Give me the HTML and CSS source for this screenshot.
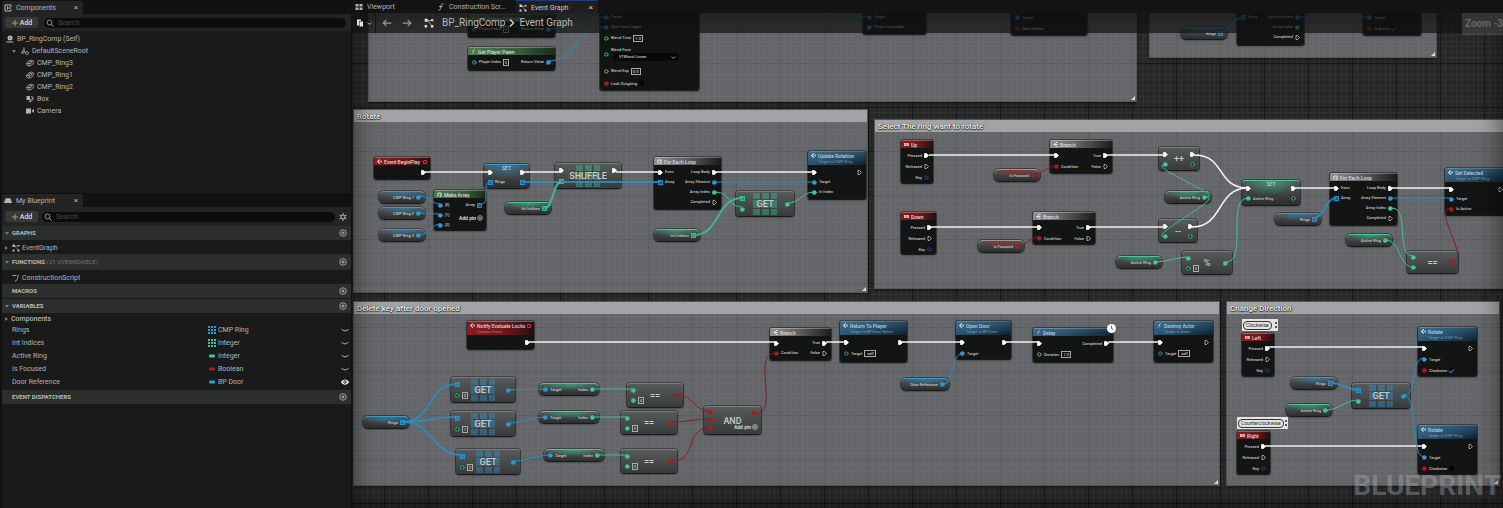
FILE: index.html
```
<!DOCTYPE html>
<html lang="en">

<head>
  <meta charset="utf-8">
  <title>BP_RingComp - Event Graph</title>
  <link rel="stylesheet" href="styles.css">
</head>

<body>
  <svg width="0" height="0" class="defs">
    <symbol id="i-plus" viewBox="0 0 16 16"><path d="M8 2v12M2 8h12" stroke="#8fae4a" stroke-width="2" /></symbol>
    <symbol id="i-search" viewBox="0 0 16 16"><circle cx="7" cy="7" r="5" fill="none" stroke="currentColor" stroke-width="1.6" /><path d="M11 11l4 4" stroke="currentColor" stroke-width="2" /></symbol>
    <symbol id="i-add" viewBox="0 0 16 16"><circle cx="8" cy="8" r="6.5" fill="none" stroke="currentColor" stroke-width="1.6" /><path d="M8 4.500v7M4.500 8h7" stroke="currentColor" stroke-width="1.800" /></symbol>
    <symbol id="i-gear" viewBox="0 0 16 16"><circle cx="8" cy="8" r="4" fill="none" stroke="currentColor" stroke-width="2" /><path d="M8 0v4M8 12v4M1 4l3.500 2M11.500 10l3.500 2M1 12l3.500-2M11.500 6L15 4" stroke="currentColor" stroke-width="2" /></symbol>
    <symbol id="i-ring" viewBox="0 0 16 16"><path d="M5 4l6-2 4 2-1 6-6 4-6-1-1-4zM5 9l3-4 4 0-2 4zM1 9l4 0 3 5" fill="none" stroke="currentColor" stroke-width="1.500" /></symbol>
    <symbol id="i-graph" viewBox="0 0 16 16"><path d="M1 1h5v5H1zM1 11h4v4H1zM11 2h4v3h-4zM11 11h4v4h-4z" fill="currentColor" /><path d="M6 4l6 8M6 4h5" stroke="currentColor" /></symbol>
    <symbol id="i-func" viewBox="0 0 16 16"><path d="M13 2c-3-1-4 0-5 4l-1 5c-1 3-2 4-4 3M4 7h7" fill="none" stroke="currentColor" stroke-width="1.800" /></symbol>
    <symbol id="i-construct" viewBox="0 0 16 16"><path d="M1 3h8M14 2c-3 1-2 4-3 7s-2 5-5 5" fill="none" stroke="currentColor" stroke-width="1.800" /></symbol>
    <symbol id="i-actor" viewBox="0 0 16 16"><circle cx="8" cy="6" r="5" fill="currentColor" /><path d="M1 14h14" stroke="currentColor" stroke-width="2" /><path d="M6 4l3 3" stroke="#1a1a1a" /></symbol>
    <symbol id="i-scene" viewBox="0 0 16 16"><path d="M6 1v9M6 5L1 12M6 8l4 4M1 12h6" fill="none" stroke="currentColor" stroke-width="1.800" /><circle cx="12" cy="12" r="3" fill="none" stroke="currentColor" stroke-width="1.500" /></symbol>
    <symbol id="i-box" viewBox="0 0 16 16"><path d="M1 2h7v8H1z" fill="currentColor" /><path d="M10 3l4 1v5l-5 5-4-2M9 13V9l5-2" fill="none" stroke="currentColor" stroke-width="1.600" /></symbol>
    <symbol id="i-camera" viewBox="0 0 16 16"><path d="M0 3h10v10H0zM11 8l5-4v8z" fill="currentColor" /></symbol>
    <symbol id="i-comps" viewBox="0 0 16 16"><path d="M14 2H2v12h12v-3M14 2v4M14 8H7M7 5v6" fill="none" stroke="currentColor" stroke-width="2" /></symbol>
    <symbol id="i-book" viewBox="0 0 16 16"><path d="M3 3l5-1 5 1 3 9H0z" fill="currentColor" /></symbol>
    <symbol id="i-view" viewBox="0 0 16 16"><path d="M1 2h6v5H1zM9 2h6v5H9zM1 9h6v5H1zM9 9h6v5H9z" fill="currentColor" /></symbol>
    <symbol id="i-find" viewBox="0 0 16 16"><path d="M2 1h8v3H6v9H2zM7 5h7v10H7z" fill="currentColor" /></symbol>
    <symbol id="i-left" viewBox="0 0 16 16"><path d="M15 8H2M7 3L2 8l5 5" fill="none" stroke="currentColor" stroke-width="2" /></symbol>
    <symbol id="i-right" viewBox="0 0 16 16"><path d="M1 8h13M9 3l5 5-5 5" fill="none" stroke="currentColor" stroke-width="2" /></symbol>
    <symbol id="i-down" viewBox="0 0 16 16"><path d="M2 5l6 6 6-6" fill="none" stroke="currentColor" stroke-width="2.500" /></symbol>
    <symbol id="i-crumb" viewBox="0 0 16 16"><path d="M4 1l7 7-7 7" fill="none" stroke="currentColor" stroke-width="2.500" /></symbol>
    <symbol id="i-grid" viewBox="0 0 16 16"><path d="M0 0h4v4H0zM6 0h4v4H6zM12 0h4v4h-4zM0 6h4v4H0zM6 6h4v4H6zM12 6h4v4h-4zM0 12h4v4H0zM6 12h4v4H6zM12 12h4v4h-4z" fill="currentColor" /></symbol>
    <symbol id="i-pill" viewBox="0 0 16 16"><rect x="2" y="5" width="12" height="6" rx="2" fill="currentColor" /></symbol>
    <symbol id="i-closed" viewBox="0 0 16 16"><path d="M1 6c4 5 10 5 14 0" fill="none" stroke="currentColor" stroke-width="2" /></symbol>
    <symbol id="i-open" viewBox="0 0 16 16"><path d="M0 8c4-7 12-7 16 0-4 7-12 7-16 0z" fill="currentColor" /><circle cx="8" cy="8" r="3.500" fill="#1a1a1a" /><circle cx="8" cy="8" r="1.500" fill="currentColor" /></symbol>
    <symbol id="p-exec" viewBox="0 0 10 10"><path d="M1 1h4l4 4-4 4H1z" fill="#fff" stroke="#fff" stroke-width="1.500" stroke-linejoin="round" /></symbol>
    <symbol id="p-execo" viewBox="0 0 10 10"><path d="M2 1h3l4 4-4 4H2z" fill="none" stroke="#ddd" stroke-width="1.400" stroke-linejoin="round" /></symbol>
    <symbol id="p-dot" viewBox="0 0 10 10"><circle cx="4.500" cy="5" r="4.500" fill="currentColor" /><path d="M8 3l2 2-2 2z" fill="currentColor" /></symbol>
    <symbol id="p-ring" viewBox="0 0 10 10"><circle cx="4.500" cy="5" r="3.300" fill="#0d1512" stroke="currentColor" stroke-width="1.800" /><path d="M8.500 3l1.500 2-1.500 2z" fill="currentColor" /></symbol>
    <symbol id="p-arr" viewBox="0 0 10 10"><path d="M0 0h10v10H0z" fill="currentColor" opacity=".45" /><path d="M0 0h3v3H0zM4 0h3v3H4zM8 0h2v3H8zM0 4h3v3H0zM8 4h2v3H8zM0 8h3v2H0zM4 8h3v2H4zM8 8h2v2H8z" fill="currentColor" /></symbol>
    <symbol id="h-event" viewBox="0 0 10 10"><path d="M5 0L0 5l5 5 1-2-3-3 3-3zM6 5l3-3v6z" fill="#eee" /></symbol>
    <symbol id="h-key" viewBox="0 0 10 10"><path d="M0 2h10v6H0z" fill="#e8b8b8" /><path d="M2 4h1M5 4h1M8 4h1M3 6h4" stroke="#7a1a1a" /></symbol>
    <symbol id="h-branch" viewBox="0 0 10 10"><path d="M9 1H6L2 5l4 4h3M2 5h7" fill="none" stroke="#fff" stroke-width="1.600" /></symbol>
    <symbol id="h-loop" viewBox="0 0 10 10"><path d="M2 7V2h6v5M5 8l3 1 1-3M1 6l2 3" fill="none" stroke="#fff" stroke-width="1.600" /></symbol>
  </svg>

  <div class="app">
    <aside class="sidebar">
      <section class="panel components">
        <div class="panel-tabs">
          <div class="panel-tab"><svg class="icon"><use href="#i-comps" /></svg>Components<button class="close" aria-label="Close Components">×</button></div>
        </div>
        <div class="panel-tools">
          <button class="add-btn"><svg class="icon"><use href="#i-plus" /></svg>Add</button>
          <label class="search"><svg class="icon"><use href="#i-search" /></svg><input type="text" placeholder="Search" aria-label="Search components"></label>
        </div>
        <ul class="tree">
          <li class="level-0"><svg class="icon"><use href="#i-actor" /></svg>BP_RingComp (Self)</li>
          <li class="level-1"><span class="arrow open"></span><svg class="icon"><use href="#i-scene" /></svg>DefaultSceneRoot</li>
          <li class="level-2"><svg class="icon"><use href="#i-ring" /></svg>CMP_Ring3</li>
          <li class="level-2"><svg class="icon"><use href="#i-ring" /></svg>CMP_Ring1</li>
          <li class="level-2"><svg class="icon"><use href="#i-ring" /></svg>CMP_Ring2</li>
          <li class="level-2"><svg class="icon"><use href="#i-box" /></svg>Box</li>
          <li class="level-2"><svg class="icon"><use href="#i-camera" /></svg>Camera</li>
        </ul>
      </section>

      <section class="panel blueprint">
        <div class="panel-tabs">
          <div class="panel-tab"><svg class="icon"><use href="#i-book" /></svg>My Blueprint<button class="close" aria-label="Close My Blueprint">×</button></div>
        </div>
        <div class="panel-tools">
          <button class="add-btn"><svg class="icon"><use href="#i-plus" /></svg>Add</button>
          <label class="search"><svg class="icon"><use href="#i-search" /></svg><input type="text" placeholder="Search" aria-label="Search blueprint"></label>
          <button class="icon-btn" aria-label="Settings"><svg class="icon"><use href="#i-gear" /></svg></button>
        </div>

        <div class="section-head"><span class="arrow open"></span><b>GRAPHS</b><button class="icon-btn" aria-label="Add graph"><svg class="icon"><use href="#i-add" /></svg></button></div>
        <div class="entry"><span class="arrow"></span><svg class="icon"><use href="#i-graph" /></svg>EventGraph</div>
        <div class="section-head tall"><span class="arrow open"></span><b>FUNCTIONS</b><span class="hint">(21 OVERRIDABLE)</span><button class="icon-btn" aria-label="Add function"><svg class="icon"><use href="#i-add" /></svg></button></div>
        <div class="entry"><span class="arrow none"></span><svg class="icon"><use href="#i-construct" /></svg>ConstructionScript</div>
        <div class="section-head"><span class="arrow none"></span><b>MACROS</b><button class="icon-btn" aria-label="Add macro"><svg class="icon"><use href="#i-add" /></svg></button></div>
        <div class="section-head"><span class="arrow open"></span><b>VARIABLES</b><button class="icon-btn" aria-label="Add variable"><svg class="icon"><use href="#i-add" /></svg></button></div>
        <div class="category"><span class="arrow"></span>Components</div>
        <table class="variables">
          <tr><td>Rings</td><td><svg class="icon c-obj"><use href="#i-grid" /></svg>CMP Ring</td><td><svg class="icon"><use href="#i-closed" /></svg></td></tr>
          <tr><td>Int Indices</td><td><svg class="icon c-int"><use href="#i-grid" /></svg>Integer</td><td><svg class="icon"><use href="#i-closed" /></svg></td></tr>
          <tr><td>Active Ring</td><td><svg class="icon c-int"><use href="#i-pill" /></svg>Integer</td><td><svg class="icon"><use href="#i-closed" /></svg></td></tr>
          <tr><td>Is Focused</td><td><svg class="icon c-bool"><use href="#i-pill" /></svg>Boolean</td><td><svg class="icon"><use href="#i-closed" /></svg></td></tr>
          <tr><td>Door Reference</td><td><svg class="icon c-obj"><use href="#i-pill" /></svg>BP Door</td><td><svg class="icon bright"><use href="#i-open" /></svg></td></tr>
        </table>
        <div class="section-head"><span class="arrow none"></span><b>EVENT DISPATCHERS</b><button class="icon-btn" aria-label="Add dispatcher"><svg class="icon"><use href="#i-add" /></svg></button></div>
      </section>
    </aside>

    <main class="editor">
      <nav class="tabs">
        <a class="tab" href="#viewport"><svg class="icon"><use href="#i-view" /></svg>Viewport</a>
        <a class="tab" href="#construction"><svg class="icon"><use href="#i-func" /></svg>Construction Scr...</a>
        <a class="tab active" href="#graph"><svg class="icon"><use href="#i-graph" /></svg>Event Graph<span class="close">×</span></a>
      </nav>
      <div class="canvas">
        <div class="world" id="world"></div>
        <div class="vignette"></div>
        <div class="toolbar">
          <button class="find" aria-label="Bookmarks"><svg class="icon"><use href="#i-find" /></svg><svg class="icon small"><use href="#i-down" /></svg></button>
          <button aria-label="Back"><svg class="icon wide"><use href="#i-left" /></svg></button>
          <button aria-label="Forward"><svg class="icon wide"><use href="#i-right" /></svg></button>
          <div class="crumbs">
            <svg class="icon wide"><use href="#i-graph" /></svg>
            <a href="#bp">BP_RingComp</a>
            <svg class="icon"><use href="#i-crumb" /></svg>
            <a href="#graph">Event Graph</a>
          </div>
          <div class="zoom">Zoom -3</div>
        </div>
        <div class="watermark">BLUEPRINT</div>
      </div>
    </main>
  </div>

  <script src="graph.js"></script>
</body>

</html>
```
FILE: styles.css
```
* {
  box-sizing: border-box;
}

body {
  margin: 0;
  background: #111;
  color: #b4b4b4;
  font-family: Roboto, "Liberation Sans", sans-serif;
  font-size: 7px;
  line-height: 10px;
}

button,
input,
select {
  margin: 0;
  padding: 0;
  border: 0;
  background: none;
  color: inherit;
  font: inherit;
}

a {
  color: inherit;
  text-decoration: none;
}

.defs {
  position: absolute;
}

.icon {
  width: 8px;
  height: 8px;
  flex: none;
}

.icon.small {
  width: 5px;
  height: 5px;
}

.icon.wide {
  width: 10px;
  height: 10px;
}

.icon.bright {
  color: #fff;
}

.c-obj { color: #2b9ad6; }
.c-int { color: #3cc79a; }
.c-bool { color: #a81c1c; }
.c-float { color: #6bd63a; }
.c-key { color: #27489c; }
.c-exec { color: #fff; }

.app {
  display: flex;
  height: 100vh;
}

/* left side */

.sidebar {
  width: 352px;
  flex: none;
  display: flex;
  flex-direction: column;
  padding: 0 1px 0 2px;
}

.panel {
  background: #1a1a1a;
}

.components {
  height: 193px;
}

.blueprint {
  flex: 1;
}

.panel-tabs {
  height: 14px;
  padding-top: 1px;
  background: #111;
}

.panel-tab {
  display: flex;
  align-items: center;
  gap: 4px;
  width: 81px;
  height: 13px;
  padding: 0 5px 0 2px;
  border-radius: 2px 2px 0 0;
  background: #242424;
}

.close {
  margin-left: auto;
  font-size: 8px;
  line-height: 8px;
}

.panel-tools {
  display: flex;
  align-items: center;
  gap: 6px;
  height: 17px;
  padding: 0 5px 0 3px;
  background: #242424;
}

.blueprint .panel-tools {
  height: 19px;
  gap: 4px;
  padding-right: 4px;
}

.add-btn {
  display: flex;
  align-items: center;
  justify-content: center;
  gap: 1px;
  width: 33px;
  height: 11px;
  border-radius: 2px;
  background: #383838;
  color: #ddd;
  font-weight: 500;
}

.search {
  display: flex;
  align-items: center;
  gap: 4px;
  flex: 1;
  height: 10px;
  padding: 0 2px;
  border-radius: 5px;
  background: #0c0c0c;
}

.search input {
  flex: 1;
  outline: none;
}

.search input::placeholder {
  color: #4a4a4a;
}

.icon-btn {
  display: flex;
}

.tree {
  margin: 0;
  padding: 2px 0 0;
  list-style: none;
}

.tree li {
  display: flex;
  align-items: center;
  gap: 3px;
  height: 12px;
}

.level-0 { padding-left: 4px; }
.level-1 { padding-left: 10px; }
.level-2 { padding-left: 24px; }

.arrow {
  width: 5px;
  flex: none;
  margin-right: 1px;
}

.arrow::before {
  content: "";
  display: block;
  width: 0;
  height: 0;
  border: 2px solid transparent;
  border-left: 3px solid #777;
  border-right: 0;
}

.arrow.open::before {
  border: 2px solid transparent;
  border-top: 3px solid #777;
  border-bottom: 0;
}

.arrow.none::before {
  border-color: transparent;
}

.section-head {
  display: flex;
  align-items: center;
  gap: 1px;
  height: 15px;
  padding: 0 4px 0 3px;
  border-bottom: 1px solid #1a1a1a;
  background: #2d2f2f;
  color: #bbb;
  font-size: 6px;
}

.section-head.tall {
  height: 17px;
}

.section-head .icon-btn {
  margin-left: auto;
}

.hint {
  margin-left: 1px;
  color: #757575;
}

.entry {
  display: flex;
  align-items: center;
  gap: 1px;
  height: 13px;
  padding-left: 3px;
}

.entry .icon {
  margin-right: 1px;
}

.category {
  display: flex;
  align-items: center;
  height: 9px;
  padding-left: 3px;
  font-weight: 500;
}

.variables {
  width: 100%;
  margin-bottom: 2px;
  border-collapse: collapse;
}

.variables tr {
  height: 13px;
}

.variables td {
  padding: 0;
}

.variables td:first-child {
  width: 206px;
  padding-left: 10px;
}

.variables td:last-child {
  text-align: right;
}

.variables .icon {
  margin-right: 2px;
  vertical-align: middle;
}

/* graph */

.editor {
  flex: 1;
  min-width: 0;
  display: flex;
  flex-direction: column;
}

.tabs {
  display: flex;
  height: 13px;
  background: #131313;
}

.tab {
  display: flex;
  align-items: center;
  gap: 4px;
  width: 82px;
  padding: 1px 5px 0 3px;
}

.tab.active {
  border-top: 1px solid #1d3a78;
  background: #1f1f1f;
  color: #ccc;
}

.canvas {
  position: relative;
  flex: 1;
  overflow: hidden;
  background-color: #262727;
  background-image:
    linear-gradient(90deg, #171818 1px, transparent 1px),
    linear-gradient(#171818 1px, transparent 1px),
    linear-gradient(90deg, #313232 1px, transparent 1px 5px, #313232 5px 6px, transparent 6px),
    linear-gradient(#313232 1px, transparent 1px 5px, #313232 5px 6px, transparent 6px);
  background-size: 44px 44px, 44px 44px, 11px 11px, 11px 11px;
  background-position: 32px 6px;
}

/* world units are window pixels, panned under the tabs and sidebar */
.world {
  position: absolute;
  left: -352px;
  top: -13px;
}

.wires {
  position: absolute;
  left: 0;
  top: 0;
  width: 1503px;
  height: 508px;
  overflow: visible;
  fill: none;
}

.wire-exec { stroke: #f2f2f2; stroke-width: 1.5px; }
.wire-obj { stroke: #2a8fc4; }
.wire-int { stroke: #3fc096; }
.wire-bool { stroke: #8a1d22; }
.thick { stroke-width: 2px; opacity: 0.85; }

.vignette {
  position: absolute;
  inset: 0;
  pointer-events: none;
  box-shadow: inset 0 0 26px rgba(0, 0, 0, 0.6);
}

.toolbar {
  position: absolute;
  inset: 0 0 auto;
  display: flex;
  align-items: center;
  height: 20px;
  background: rgba(18, 18, 18, 0.68);
}

.toolbar button {
  display: flex;
  align-items: center;
  justify-content: center;
  width: 20px;
  height: 20px;
  color: #999;
}

.toolbar .find {
  gap: 3px;
  width: 24px;
  margin-right: 1px;
  border-right: 1px solid #161616;
  color: #ddd;
}

.crumbs {
  display: flex;
  align-items: center;
  gap: 3px;
  height: 20px;
  padding-left: 7px;
  color: #b8b8b8;
  font-size: 10px;
}

.crumbs .icon {
  color: #ddd;
}

.crumbs .icon.wide {
  margin-right: 5px;
}

.zoom {
  align-self: flex-start;
  flex: none;
  margin-left: auto;
  width: 41px;
  padding-left: 3px;
  background: rgba(130, 130, 130, 0.3);
  color: #666;
  font-size: 10px;
  font-weight: bold;
  line-height: 22px;
  white-space: nowrap;
}

.watermark {
  position: absolute;
  right: 2px;
  bottom: 6px;
  color: rgba(170, 175, 180, 0.4);
  font-size: 28px;
  font-weight: bold;
  line-height: 32px;
}

.comment {
  position: absolute;
  border: 1px solid rgba(70, 70, 70, 0.5);
  background: rgba(172, 174, 180, 0.46);
  box-shadow: 0 1px 2px rgba(0, 0, 0, 0.6);
}

.comment::after {
  content: "";
  position: absolute;
  right: 1px;
  bottom: 1px;
  border-left: 4px solid transparent;
  border-bottom: 4px solid #ddd;
}

.comment h2 {
  margin: 0;
  height: 12px;
  padding-left: 3px;
  background: #a2a3a5;
  color: #f0f0f0;
  font-size: 8px;
  font-weight: 500;
  line-height: 13px;
  text-shadow: 0 1px 1px #222, 1px 0 1px #333;
}

.node {
  position: absolute;
  overflow: hidden;
  border-radius: 2px;
  background: rgba(14, 17, 15, 0.95);
  box-shadow: 0 1px 2px rgba(0, 0, 0, 0.8), 0 0 0 1px rgba(10, 10, 10, 0.4);
  color: #c4c4c4;
  font-size: 4px;
  font-weight: 500;
  line-height: 6px;
  white-space: nowrap;
}

.node header {
  display: flex;
  gap: 2px;
  height: 8px;
  padding: 1px 3px;
  border-top: 1px solid rgba(255, 255, 255, 0.3);
  color: #dcdcdc;
  font-size: 5px;
}

.node header small {
  display: block;
  color: rgba(255, 255, 255, 0.35);
  font-size: 4px;
  line-height: 6px;
}

.node header .icon {
  width: 5px;
  height: 5px;
}

.node .delegate {
  width: 4px;
  height: 4px;
  margin: 1px 0 0 auto;
  border: 1px solid #d33;
  border-radius: 1px;
}

.node.sub header { height: 14px; }
.node.red header { background: linear-gradient(90deg, #8c1b1e, #6d1518 60%, #251010); }
.node.blue header { background: linear-gradient(165deg, #3c6f92, #28506c 50%, #10202a); }
.node.blue header { color: #b9d2e2; }
.node.green header { background: linear-gradient(90deg, #4d7b4e, #385c39 60%, #1b2b1b); }
.node.gray header { background: linear-gradient(90deg, #909090, #5c5c5c 50%, #1c1c1c); }

.rows {
  display: flex;
  justify-content: space-between;
  padding: 2px 4px 0;
}

.rows > div,
.compact > div {
  display: flex;
  flex-direction: column;
}

.pin {
  display: flex;
  align-items: center;
  gap: 2px;
}

.out .pin {
  justify-content: flex-end;
}

.pin svg {
  width: 5px;
  height: 5px;
  flex: none;
}

.pin input[type="text"] {
  height: 7px;
  border: 1px solid #aaa;
  text-align: center;
}

.pin input[type="checkbox"] {
  appearance: none;
  width: 5px;
  height: 5px;
  border-radius: 1px;
  background: #050505;
}

.pin input[type="checkbox"]:checked::after {
  content: "";
  display: block;
  width: 4px;
  height: 2px;
  margin: 1px 0 0;
  border-left: 1px solid #2f7fe0;
  border-bottom: 1px solid #2f7fe0;
  transform: rotate(-45deg);
}

.pin .stack {
  position: relative;
  display: flex;
  flex-direction: column;
  align-items: flex-start;
}

.pin select {
  appearance: none;
  width: 66px;
  height: 8px;
  margin-left: 2px;
  padding: 0 6px;
  border-radius: 2px;
  background: #070808;
}

.stack svg {
  position: absolute;
  right: 3px;
  bottom: 1px;
}

.compact {
  display: flex;
  justify-content: space-between;
  padding: 1px 4px;
  border-top: 1px solid rgba(170, 170, 170, 0.6);
  border-radius: 3px;
  background: linear-gradient(rgba(84, 88, 88, 0.85), rgba(52, 54, 54, 0.9));
}

.compact > div {
  position: relative;
  justify-content: space-around;
}

.compact strong {
  position: absolute;
  inset: 0;
  display: flex;
  align-items: center;
  justify-content: center;
  color: #c8cccc;
  font-size: 9px;
  font-weight: 500;
}

.compact.set strong {
  inset: 0 0 auto;
  font-size: 5px;
}

.compact.set {
  padding-top: 2px;
}

.compact.glow-int,
.var.glow-int {
  border-top-color: #4fc59d;
  background: radial-gradient(ellipse 50% 60% at 50% 0, rgba(50, 180, 130, 0.7), transparent), linear-gradient(#525757, #2c2e2e);
}

.compact.glow-obj,
.var.glow-obj {
  border-top-color: #3c9cc9;
  background: radial-gradient(ellipse 50% 60% at 50% 0, rgba(40, 130, 190, 0.7), transparent), linear-gradient(#525757, #2c2e2e);
}

.var.glow-bool {
  background: radial-gradient(ellipse 50% 60% at 50% 0, rgba(180, 30, 30, 0.7), transparent), linear-gradient(#525757, #2c2e2e);
}

/* 3x3 tiles behind GET and SHUFFLE */
.tiles {
  position: absolute;
  top: 1px;
  bottom: 1px;
  left: 50%;
  width: 24px;
  margin-left: -12px;
  opacity: 0.38;
  background-image:
    linear-gradient(90deg, transparent 7px, #3c4141 7px),
    linear-gradient(currentColor, currentColor);
  background-size: 9px 100%, 100% 100%;
}

.tiles::after {
  content: "";
  position: absolute;
  inset: 6px 0;
  border: solid #3c4141;
  border-width: 1px 0;
}

.var {
  display: flex;
  align-items: center;
  justify-content: flex-end;
  gap: 2px;
  padding: 0 4px;
  border-top: 1px solid #999;
  border-radius: 5px;
}

.var.both {
  justify-content: space-between;
}

.add-pin {
  position: absolute;
  right: 3px;
  bottom: 4px;
  display: flex;
  align-items: center;
  gap: 1px;
  color: #e8e8e8;
  font-size: 5px;
}

.green .add-pin {
  bottom: 9px;
}

.add-pin svg {
  width: 6px;
  height: 6px;
}

.bubble {
  position: absolute;
  display: flex;
  align-items: center;
  justify-content: space-between;
  padding: 1px;
  background: #e4e4e4;
  color: #222;
  font-size: 5px;
  line-height: 7px;
}

.bubble span {
  padding: 0 2px;
  border: 1px solid #333;
  border-radius: 4px;
}

.bubble i {
  width: 2px;
  height: 6px;
  border: solid #555;
  border-width: 2px 0;
}

.latent {
  position: absolute;
}
```
FILE: graph.js
```
const world = document.getElementById('world');

// [title, x, y, w, h]
const comments = [
  ['', 368, -40, 769, 142],
  ['', 1149, -40, 288, 98],
  ['Rotate', 353, 109, 515, 184],
  ['Select The ring want to rotate', 874, 119, 660, 170],
  ['Delete key after door opened', 353, 301, 867, 185],
  ['Change Direction', 1226, 301, 274, 185],
];

// pins are "shape:type:label", optional fourth part is a value box
const key = ['exec:exec:Pressed', 'execo:exec:Released', 'ring:key:Key'];
const loopIn = ['exec:exec:Exec', 'arr:obj:Array'];
const loopOut = ['exec:exec:Loop Body', 'dot:obj:Array Element', 'dot:int:Array Index', 'execo:exec:Completed'];
const branchIn = ['exec:exec:', 'dot:bool:Condition'];
const branchOut = ['exec:exec:True', 'execo:exec:False'];

const nodes = [
  { c: 'green', x: 468, y: 14, w: 87, h: 23, t: 'Get Player Controller', icon: 'func', i: ['ring:int:Player Index:0'], o: ['dot:obj:Return Value'] },
  { c: 'green', x: 468, y: 47, w: 87, h: 23, t: 'Get Player Pawn', icon: 'func', i: ['ring:int:Player Index:0'], o: ['dot:obj:Return Value'] },
  { c: 'blue', x: 600, y: 2, w: 99, h: 88, t: '', rows: [10, 10, 12, 20, 14, 11], i: ['dot:obj:Target', 'dot:obj:New View Target', 'ring:float:Blend Time:1.0', 'ring:int:Blend Func:select', 'ring:float:Blend Exp:0.0', 'dot:bool:Lock Outgoing:off'], o: [] },
  { c: 'blue', x: 863, y: 2, w: 63, h: 32, t: '', i: ['dot:obj:Target', 'dot:obj:Player Controller'], o: [] },
  { c: 'blue', x: 1011, y: 2, w: 76, h: 33, t: '', row: 11, i: ['dot:obj:Target', 'dot:bool:New Hidden'], o: [] },
  { c: 'gray', x: 1237, y: -8, w: 67, h: 53, t: '', i: ['', 'arr:obj:Array'], o: ['', ...loopOut.slice(1)] },
  { c: 'blue', x: 1363, y: 2, w: 58, h: 33, t: '', row: 11, i: ['dot:obj:Target', 'dot:bool:Is Active:on'], o: [] },

  { c: 'red', x: 374, y: 157, w: 56, h: 22, t: 'Event BeginPlay', icon: 'event', delegate: true, i: [], o: ['exec:exec:'] },
  { c: 'green', x: 434, y: 190, w: 52, h: 40, t: 'Make Array', icon: 'loop', addPin: true, i: ['dot:obj:[0]', 'dot:obj:[1]', 'dot:obj:[2]'], o: ['arr:obj:Array'] },
  { c: 'gray', x: 654, y: 157, w: 67, h: 52, t: 'For Each Loop', icon: 'loop', i: loopIn, o: loopOut },
  { c: 'blue sub', x: 808, y: 151, w: 58, h: 48, t: 'Update Rotation', s: 'Target is CMP Ring', icon: 'event', i: ['exec:exec:', 'dot:obj:Target', 'dot:int:In Index'], o: ['execo:exec:'] },

  { c: 'red', x: 901, y: 140, w: 32, h: 43, t: 'Up', icon: 'key', row: 11, i: [], o: key },
  { c: 'red', x: 901, y: 212, w: 35, h: 42, t: 'Down', icon: 'key', row: 11, i: [], o: key },
  { c: 'gray', x: 1050, y: 140, w: 62, h: 33, t: 'Branch', icon: 'branch', row: 11, i: branchIn, o: branchOut },
  { c: 'gray', x: 1033, y: 212, w: 62, h: 32, t: 'Branch', icon: 'branch', row: 11, i: branchIn, o: branchOut },
  { c: 'gray', x: 1330, y: 173, w: 67, h: 52, t: 'For Each Loop', icon: 'loop', i: loopIn, o: loopOut },
  { c: 'blue sub', x: 1445, y: 168, w: 62, h: 47, t: 'Set Selected', s: 'Target is CMP Ring', icon: 'event', i: ['exec:exec:', 'dot:obj:Target', 'dot:bool:Is Active'], o: ['execo:exec:'] },

  { c: 'red sub', x: 467, y: 321, w: 67, h: 28, t: 'Notify Evaluate Locks', s: 'Custom Event', icon: 'event', delegate: true, i: [], o: ['exec:exec:'] },
  { c: 'gray', x: 770, y: 328, w: 61, h: 32, t: 'Branch', icon: 'branch', i: branchIn, o: branchOut },
  { c: 'blue sub', x: 840, y: 321, w: 67, h: 41, t: 'Return To Player', s: 'Target is BP Door Game', icon: 'event', row: 11, i: ['exec:exec:', 'ring:obj:Target:self'], o: ['exec:exec:'] },
  { c: 'blue sub', x: 956, y: 321, w: 55, h: 38, t: 'Open Door', s: 'Target is BP Door', icon: 'event', row: 11, i: ['exec:exec:', 'dot:obj:Target'], o: ['exec:exec:'] },
  { c: 'blue', x: 1033, y: 328, w: 80, h: 34, t: 'Delay', icon: 'func', row: 11, i: ['exec:exec:', 'ring:float:Duration:1.0'], o: ['exec:exec:Completed'] },
  { c: 'blue sub', x: 1154, y: 321, w: 59, h: 41, t: 'Destroy Actor', s: 'Target is Actor', icon: 'func', row: 11, i: ['exec:exec:', 'ring:obj:Target:self'], o: ['execo:exec:'] },

  { c: 'red', x: 1242, y: 333, w: 32, h: 43, t: 'Left', icon: 'key', row: 11, i: [], o: key },
  { c: 'red', x: 1237, y: 431, w: 33, h: 43, t: 'Right', icon: 'key', row: 11, i: [], o: key },
  { c: 'blue sub', x: 1418, y: 327, w: 59, h: 49, t: 'Rotate', s: 'Target is CMP Ring', icon: 'event', row: 11, i: ['exec:exec:', 'dot:obj:Target', 'dot:bool:Clockwise:on'], o: ['execo:exec:'] },
  { c: 'blue sub', x: 1418, y: 425, w: 59, h: 49, t: 'Rotate', s: 'Target is CMP Ring', icon: 'event', row: 11, i: ['exec:exec:', 'dot:obj:Target', 'dot:bool:Clockwise:off'], o: ['execo:exec:'] },
];

// nodes with a big title in the middle
const compact = [
  { c: 'set glow-obj', x: 484, y: 164, w: 45, h: 24, t: 'SET', i: ['exec:exec:', 'arr:obj:Rings'], o: ['exec:exec:', 'arr:obj:'] },
  { x: 555, y: 163, w: 66, h: 25, t: 'SHUFFLE', tiles: 'int', i: ['exec:exec:', 'arr:int:'], o: ['exec:exec:', ''] },
  { x: 736, y: 191, w: 58, h: 25, t: 'GET', tiles: 'int', i: ['arr:int:', 'dot:int:'], o: ['dot:int:'] },
  { x: 1159, y: 147, w: 40, h: 23, t: '++', i: ['exec:exec:', 'dot:int:'], o: ['exec:exec:', 'ring:int:'] },
  { x: 1159, y: 219, w: 38, h: 23, t: '--', i: ['exec:exec:', 'dot:int:'], o: ['exec:exec:', 'ring:int:'] },
  { x: 1182, y: 251, w: 50, h: 23, t: '%', i: ['dot:int:', 'ring:int::3'], o: ['dot:int:'] },
  { c: 'set glow-int', x: 1242, y: 180, w: 58, h: 25, t: 'SET', i: ['exec:exec:', 'dot:int:Active Ring'], o: ['exec:exec:', 'ring:int:'] },
  { x: 1407, y: 251, w: 51, h: 22, t: '==', i: ['dot:int:', 'dot:int:'], o: ['dot:bool:'] },
  { x: 451, y: 377, w: 64, h: 25, t: 'GET', tiles: 'obj', i: ['arr:obj:', 'ring:int::0'], o: ['dot:obj:'] },
  { x: 451, y: 411, w: 64, h: 25, t: 'GET', tiles: 'obj', i: ['arr:obj:', 'ring:int::1'], o: ['dot:obj:'] },
  { x: 456, y: 449, w: 64, h: 25, t: 'GET', tiles: 'obj', i: ['arr:obj:', 'ring:int::2'], o: ['dot:obj:'] },
  { x: 627, y: 383, w: 56, h: 24, t: '==', i: ['dot:int:', 'dot:int::4'], o: ['dot:bool:'] },
  { x: 621, y: 411, w: 56, h: 23, t: '==', i: ['dot:int:', 'dot:int::5'], o: ['dot:bool:'] },
  { x: 621, y: 449, w: 56, h: 24, t: '==', i: ['dot:int:', 'dot:int::0'], o: ['dot:bool:'] },
  { x: 704, y: 406, w: 57, h: 28, t: 'AND', addPin: true, i: ['dot:bool:', 'dot:bool:', 'dot:bool:'], o: ['dot:bool:', '', ''] },
  { x: 1352, y: 383, w: 58, h: 25, t: 'GET', tiles: 'obj', i: ['arr:obj:', 'dot:int:'], o: ['dot:obj:'] },
];

// [label, type, shape, x, y, w]
const vars = [
  ['Rings', 'obj', 'arr', 1181, 27, 46],
  ['CMP Ring 1', 'obj', 'dot', 379, 191, 46],
  ['CMP Ring 2', 'obj', 'dot', 379, 207, 46],
  ['CMP Ring 3', 'obj', 'dot', 379, 229, 46],
  ['Int Indices', 'int', 'arr', 505, 202, 46],
  ['Int Indices', 'int', 'arr', 654, 229, 46],
  ['Is Focused', 'bool', 'dot', 994, 169, 46],
  ['Is Focused', 'bool', 'dot', 978, 240, 46],
  ['Active Ring', 'int', 'dot', 1165, 191, 46],
  ['Active Ring', 'int', 'dot', 1116, 256, 46],
  ['Rings', 'obj', 'arr', 1275, 213, 46],
  ['Active Ring', 'int', 'dot', 1346, 234, 46],
  ['Rings', 'obj', 'arr', 363, 416, 46],
  ['Door Reference', 'obj', 'dot', 901, 378, 48],
  ['Rings', 'obj', 'arr', 1291, 377, 46],
  ['Active Ring', 'int', 'dot', 1286, 404, 46],
  ['Index', 'int', 'dot', 539, 383, 60, 'Target'],
  ['Index', 'int', 'dot', 539, 411, 60, 'Target'],
  ['Index', 'int', 'dot', 544, 449, 60, 'Target'],
];

// [type, x1, y1, x2, y2, bend], array wires are thick
const wires = [
  ['exec', 425, 172, 490, 172], ['exec', 524, 172, 561, 172], ['exec', 616, 172, 660, 172], ['exec', 716, 172, 814, 172],
  ['obj', 420, 196, 440, 204, 8], ['obj', 420, 213, 440, 214, 8], ['obj', 420, 235, 440, 224, 8], ['obj', 482, 204, 490, 182, 8],
  ['obj thick', 524, 182, 660, 182], ['obj', 716, 182, 814, 182],
  ['int thick', 545, 208, 561, 182, 8], ['int', 716, 192, 742, 207, 14], ['int thick', 694, 235, 742, 198, 26], ['int', 788, 203, 814, 192, 12],
  ['exec', 929, 155, 1056, 155], ['exec', 1107, 155, 1165, 155], ['exec', 931, 227, 1039, 227], ['exec', 1090, 227, 1165, 227],
  ['bool', 1034, 174, 1056, 166, 8], ['bool', 1018, 246, 1039, 237, 8],
  ['exec', 1194, 155, 1248, 188, 32], ['exec', 1192, 227, 1248, 188, 32], ['exec', 1294, 188, 1336, 188], ['exec', 1392, 188, 1451, 188],
  ['int', 1206, 197, 1165, 165, 20], ['int', 1206, 197, 1165, 237, 20], ['int', 1155, 262, 1188, 257, 10], ['int', 1226, 262, 1248, 198, 22],
  ['obj thick', 1314, 218, 1336, 198, 10], ['obj', 1392, 198, 1451, 198],
  ['int', 1392, 208, 1413, 256, 18], ['int', 1386, 240, 1413, 267, 14], ['bool', 1452, 261, 1451, 208, 20],
  ['exec', 529, 342, 776, 342], ['exec', 826, 342, 846, 342], ['exec', 902, 342, 962, 342], ['exec', 1006, 342, 1039, 342], ['exec', 1108, 342, 1160, 342],
  ['obj thick', 403, 422, 457, 384, 30], ['obj thick', 403, 422, 457, 417, 30], ['obj thick', 403, 422, 462, 455, 30],
  ['obj', 509, 390, 545, 389, 12], ['obj', 509, 423, 545, 417, 12], ['obj', 514, 461, 550, 455, 12],
  ['int', 594, 389, 633, 389], ['int', 594, 417, 627, 417], ['int', 599, 455, 627, 455],
  ['bool', 677, 395, 710, 411, 18], ['bool', 672, 422, 710, 419, 12], ['bool', 672, 461, 710, 428, 26], ['bool', 755, 414, 776, 353, 26],
  ['obj', 943, 384, 962, 354, 12],
  ['exec', 1268, 347, 1424, 347], ['exec', 1264, 446, 1424, 446],
  ['obj thick', 1332, 383, 1358, 390, 10], ['int', 1326, 410, 1358, 400, 12], ['obj', 1404, 395, 1424, 358, 14], ['obj', 1404, 395, 1424, 457, 14],
  ['obj', 547, 29, 605, 17, 26], ['obj', 547, 61, 605, 27, 30],
  ['obj thick', 1221, 32, 1243, 17, 10], ['obj', 1298, 17, 1369, 17], ['obj', 824, 14, 869, 17, 4],
];

const box = (x, y, w, h) => `style="left:${x}px;top:${y}px;width:${w}px;height:${h}px"`;

function pinIcon(shape, type) {
  return `<svg class="c-${type}"><use href="#p-${shape}"/></svg>`;
}

function pin(text, out, height) {
  const size = height ? `style="height:${height}px"` : '';
  if (!text) return `<div class="pin" ${size}></div>`;
  const [shape, type, label, value] = text.split(':');
  const name = label || 'value';
  let body = label ? `<span>${label}</span>` : '';
  if (value === 'on' || value === 'off') {
    body += `<input type="checkbox" aria-label="${name}" ${value === 'on' ? 'checked' : ''}>`;
  } else if (value === 'select') {
    body = `<span class="stack">${body}<select aria-label="${name}"><option>VTBlend Linear</option></select><svg><use href="#i-down"/></svg></span>`;
  } else if (value !== undefined) {
    body += `<input type="text" aria-label="${name}" value="${value}" style="width:${value.length * 2 + 4}px">`;
  }
  return `<div class="pin" ${size}>${out ? body + pinIcon(shape, type) : pinIcon(shape, type) + body}</div>`;
}

const addPinHtml = '<button class="add-pin">Add pin<svg><use href="#i-add"/></svg></button>';

let html = comments.map(([t, x, y, w, h]) => `<section class="comment" ${box(x, y, w, h)}><h2>${t}</h2></section>`).join('');

nodes.forEach((n) => {
  const rowHeight = (k) => (n.rows ? n.rows[k] : n.row || 10);
  const icon = n.icon ? `<svg class="icon"><use href="#${n.icon === 'func' ? 'i' : 'h'}-${n.icon}"/></svg>` : '';
  html += `<article class="node ${n.c}" ${box(n.x, n.y, n.w, n.h)}>
    <header>${icon}<span>${n.t}${n.s ? `<small>${n.s}</small>` : ''}</span>${n.delegate ? '<i class="delegate"></i>' : ''}</header>
    <div class="rows">
      <div class="in">${n.i.map((p, k) => pin(p, false, rowHeight(k))).join('')}</div>
      <div class="out">${n.o.map((p, k) => pin(p, true, rowHeight(k))).join('')}</div>
    </div>${n.addPin ? addPinHtml : ''}
  </article>`;
});

compact.forEach((n) => {
  html += `<article class="node compact ${n.c || ''}" ${box(n.x, n.y, n.w, n.h)}>
    ${n.tiles ? `<i class="tiles c-${n.tiles}"></i>` : ''}<strong>${n.t}</strong>
    <div class="in">${n.i.map((p) => pin(p, false, 6)).join('')}</div>
    <div class="out">${n.o.map((p) => pin(p, true, 6)).join('')}</div>
    ${n.addPin ? addPinHtml : ''}
  </article>`;
});

vars.forEach(([label, type, shape, x, y, w, target]) => {
  html += `<article class="node var glow-${type} ${target ? 'both' : ''}" ${box(x, y, w, 12)}>
    ${target ? pin(`dot:obj:${target}`, false) : ''}<div class="out">${pin(`${shape}:${type}:${label}`, true)}</div>
  </article>`;
});

const paths = wires.map(([type, x1, y1, x2, y2, bend = 0]) =>
  `<path class="wire-${type}" d="M${x1} ${y1}C${x1 + bend} ${y1} ${x2 - bend} ${y2} ${x2} ${y2}"/>`).join('');
html += `<svg class="wires">${paths}</svg>`;

html += `<div class="bubble" ${box(1242, 319, 36, 12)}><span>Clockwise</span><i></i></div>`;
html += `<div class="bubble" ${box(1237, 417, 51, 12)}><span>Counterclockwise</span><i></i></div>`;
html += `<svg class="latent" viewBox="0 0 10 10" ${box(1107, 324, 9, 9)}><circle cx="5" cy="5" r="5" fill="#fff"/><path d="M5 2v3l2 1" fill="none" stroke="#555"/></svg>`;

world.innerHTML = html;
```
